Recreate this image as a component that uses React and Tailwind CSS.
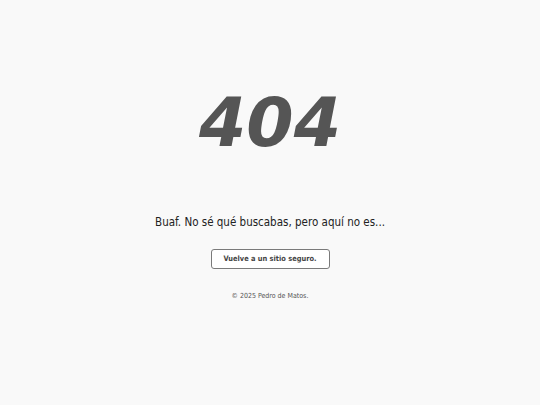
export default function App() {
  return (
    <div className="min-h-screen w-full bg-[#f9f9f9] flex flex-col items-center text-[#222] font-['DejaVu_Sans_Condensed','DejaVu_Sans',sans-serif]">
      <h1 className="mt-[81px] text-[68px] leading-[84px] font-bold italic text-[#555] font-['DejaVu_Sans',sans-serif]">404</h1>
      <p className="mt-[49px] text-[11.5px] leading-[16px]">Buaf. No sé qué buscabas, pero aquí no es...</p>
      <button className="mt-[19px] h-[20px] w-[119px] rounded-[3px] border border-[#7a7a7a] bg-white text-[7.4px] font-bold text-[#444]">
        Vuelve a un sitio seguro.
      </button>
      <p className="mt-[22px] text-[7px] text-[#555]">© 2025 Pedro de Matos.</p>
    </div>
  );
}
